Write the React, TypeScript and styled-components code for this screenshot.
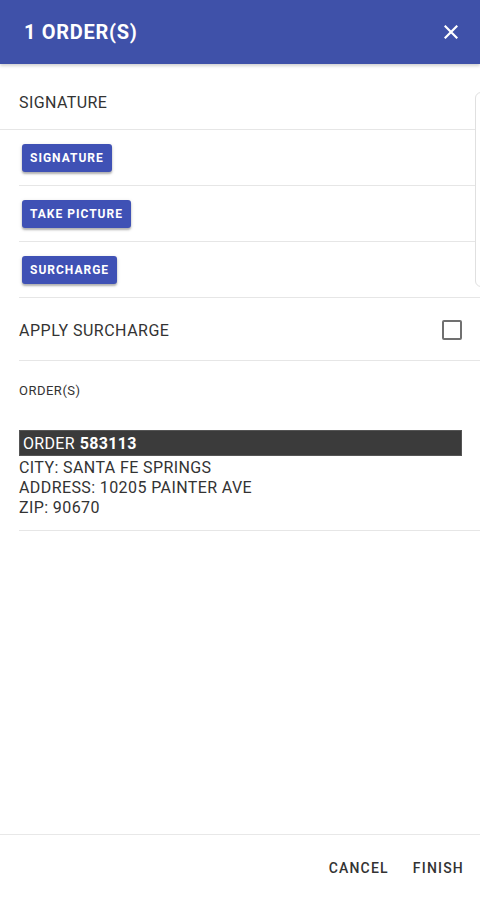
import React from "react";
import styled, { createGlobalStyle } from "styled-components";

const Global = createGlobalStyle`
  html, body { margin: 0; padding: 0; background: #fff; }
  body { font-family: Roboto, "Noto Sans", Arial, sans-serif; }
  * { box-sizing: border-box; }
`;

const Page = styled.div`
  position: relative;
  width: 480px;
  height: 900px;
  display: flex;
  flex-direction: column;
  overflow: hidden;
  background: #fff;
`;

const Header = styled.header`
  height: 64px;
  flex: none;
  background: #3f51a9;
  display: flex;
  align-items: center;
  justify-content: space-between;
  padding: 0 18px 0 24px;
  box-shadow: 0 2px 3px rgba(0, 0, 0, 0.18);
  z-index: 1;
`;

const Title = styled.h1`
  margin: 0;
  color: #fff;
  font-size: 20px;
  font-weight: 700;
  letter-spacing: 0.7px;
`;

const CloseButton = styled.button`
  border: 0;
  background: transparent;
  padding: 4px;
  display: flex;
  cursor: pointer;
`;

const Body = styled.main`
  flex: 1;
  display: flex;
  flex-direction: column;
`;

const SectionRow = styled.div`
  height: 66px;
  display: flex;
  align-items: center;
  padding: 11px 19px 0;
  border-bottom: 1px solid #e6e6e6;
  font-size: 16px;
  letter-spacing: 0.4px;
  color: #333;
`;

const ActionRow = styled.div`
  height: 56px;
  margin-left: 19px;
  display: flex;
  align-items: center;
  padding-left: 3px;
  border-bottom: 1px solid #e6e6e6;
`;

const ActionButton = styled.button`
  height: 28px;
  padding: 0 8px;
  border: 0;
  border-radius: 3px;
  background: #3f51b5;
  color: #fff;
  font-family: Roboto, Arial, sans-serif;
  font-size: 12px;
  font-weight: 700;
  letter-spacing: 1px;
  box-shadow: 0 2px 2px rgba(0, 0, 0, 0.25), 0 1px 4px rgba(0, 0, 0, 0.12);
  cursor: pointer;
`;

const CheckRow = styled.label`
  height: 63px;
  margin-left: 19px;
  display: flex;
  align-items: center;
  justify-content: space-between;
  padding: 2px 18px 0 0;
  border-bottom: 1px solid #e6e6e6;
  font-size: 16px;
  color: #333;
  letter-spacing: 0.5px;
`;

const CheckBox = styled.span`
  width: 20px;
  height: 20px;
  border: 2px solid #707070;
  border-radius: 2px;
`;

const OrdersBlock = styled.section`
  margin-left: 19px;
  padding: 22px 18px 12px 0;
  border-bottom: 1px solid #e6e6e6;
`;

const SmallLabel = styled.div`
  font-size: 13px;
  letter-spacing: 0.5px;
  color: #333;
  margin-bottom: 32px;
`;

const OrderBar = styled.div`
  height: 26px;
  background: #3b3b3b;
  border: 1px solid #555;
  color: #fff;
  font-size: 16px;
  letter-spacing: 0.3px;
  display: flex;
  align-items: center;
  padding-left: 3px;
  margin-bottom: 2px;

  b { font-weight: 700; margin-left: 5px; }
`;

const InfoLine = styled.div`
  font-size: 16px;
  line-height: 20px;
  color: #333;
  letter-spacing: 0.4px;
`;

const Footer = styled.footer`
  height: 66px;
  flex: none;
  border-top: 1px solid #e8e8e8;
  display: flex;
  justify-content: flex-end;
  align-items: center;
  gap: 8px;
  padding: 0 8px 0 0;
`;

const TextButton = styled.button`
  border: 0;
  background: transparent;
  font-family: Roboto, Arial, sans-serif;
  font-size: 14px;
  font-weight: 500;
  letter-spacing: 1.2px;
  color: #333;
  padding: 8px 8px;
  cursor: pointer;
`;

const SideCard = styled.div`
  position: absolute;
  left: 475px;
  top: 92px;
  width: 20px;
  height: 195px;
  border: 1px solid #e0e0e0;
  border-radius: 6px;
  background: #fff;
`;

export default function App() {
  return (
    <Page>
      <Global />
      <Header>
        <Title>1 ORDER(S)</Title>
        <CloseButton aria-label="close">
          <svg width="14" height="14" viewBox="0 0 14 14">
            <path d="M1.5 1.5 L12.5 12.5 M12.5 1.5 L1.5 12.5" stroke="#fff" strokeWidth="2.2" strokeLinecap="square" />
          </svg>
        </CloseButton>
      </Header>
      <Body>
        <SectionRow>SIGNATURE</SectionRow>
        <ActionRow><ActionButton>SIGNATURE</ActionButton></ActionRow>
        <ActionRow><ActionButton>TAKE PICTURE</ActionButton></ActionRow>
        <ActionRow><ActionButton>SURCHARGE</ActionButton></ActionRow>
        <CheckRow>
          APPLY SURCHARGE
          <CheckBox />
        </CheckRow>
        <OrdersBlock>
          <SmallLabel>ORDER(S)</SmallLabel>
          <OrderBar>ORDER<b>583113</b></OrderBar>
          <InfoLine>CITY: SANTA FE SPRINGS</InfoLine>
          <InfoLine>ADDRESS: 10205 PAINTER AVE</InfoLine>
          <InfoLine>ZIP: 90670</InfoLine>
        </OrdersBlock>
      </Body>
      <Footer>
        <TextButton>CANCEL</TextButton>
        <TextButton>FINISH</TextButton>
      </Footer>
      <SideCard />
    </Page>
  );
}
